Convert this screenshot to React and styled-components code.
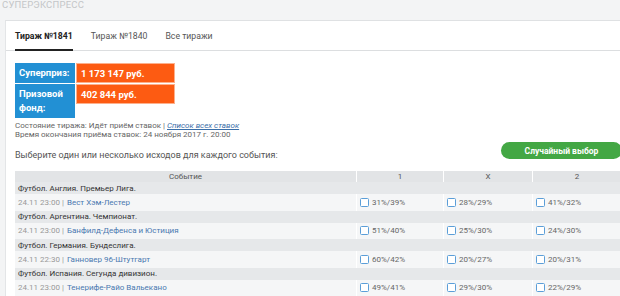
import React from "react";
import styled, { createGlobalStyle } from "styled-components";

const Global = createGlobalStyle`
html, body {
    margin: 0;
    padding: 0;
    background: #f3f4f5;
    font-family: Roboto, "Liberation Sans", sans-serif;
    overflow: hidden;
}
`

const Page = styled.div`
width: 620px;
height: 296px;
overflow: hidden;
background: #f3f4f5;
`

const Heading = styled.div`
height: 20px;
padding-left: 2px;
font-size: 9.5px;
line-height: 10px;
letter-spacing: 0.2px;
color: #c4c6c8;
text-transform: uppercase;
`

const Panel = styled.div`
margin-left: 5px;
background: #fff;
border-top: 1px solid #dfe1e3;
border-left: 1px solid #e3e5e7;
height: 300px;
`

const Tabs = styled.div`
display: flex;
gap: 18px;
padding-left: 9px;
border-bottom: 1px solid #dcdee0;
height: 29px;
`

const Tab = styled.div`
display: flex;
align-items: center;
font-size: 8.7px;
font-weight: ${p => (p.$active ? 700 : 400)};
color: ${p => (p.$active ? "#222" : "#555")};
border-bottom: 2px solid ${p => (p.$active ? "#222" : "transparent")};
margin-bottom: -1px;
padding-top: 1px;
`

const Body = styled.div`
padding: 12px 0 0 9px;
`

const Prize = styled.div`
display: grid;
grid-template-columns: 61px 99px;
width: 160px;
align-items: start;
row-gap: 1px;
`

const Label = styled.div`
background: #2290d4;
color: #fff;
font-size: 9.5px;
font-weight: 700;
line-height: 14px;
padding: 3px 4px;
height: ${p => p.$h}px;
box-sizing: border-box;
border-right: 1px solid #fff;
`

const Value = styled.div`
background: #fd5b12;
color: #fff;
font-size: 9.5px;
font-weight: 700;
line-height: 13px;
padding: 3px 4px;
height: 20px;
box-sizing: border-box;
border: 1px solid #fdb08c;
`

const Status = styled.div`
margin-top: 3px;
font-size: 8px;
line-height: 9px;
color: #666;
`

const Link = styled.a`
color: #3a6ea8;
font-style: italic;
text-decoration: underline;
`

const Choose = styled.div`
display: flex;
justify-content: space-between;
align-items: flex-end;
margin-top: 3px;
`

const Hint = styled.div`
font-size: 9px;
line-height: 10px;
color: #555;
margin-bottom: -1px;
`

const RandomBtn = styled.button`
width: 121px;
height: 17px;
border: none;
border-radius: 9px;
background: #43a744;
color: #fff;
font-family: Roboto, "Liberation Sans", sans-serif;
font-size: 8.5px;
font-weight: 700;
padding: 0;
margin-right: -2px;
`

const Table = styled.div`
margin-top: 12px;
width: 606px;
font-size: 8px;
`

const Row = styled.div`
display: grid;
grid-template-columns: 341px 87px 89px 1fr;
height: ${p => p.$h}px;
background: ${p => p.$bg};
align-items: center;
`

const HeadCell = styled.div`
text-align: center;
color: #555;
height: 100%;
display: flex;
align-items: center;
justify-content: center;
border-left: ${p => (p.$first ? "none" : "1px solid #fff")};
`

const Category = styled.div`
height: 12px;
background: #e6e8ea;
color: #333;
padding-left: 3px;
display: flex;
align-items: center;
`

const EventCell = styled.div`
padding-left: 3px;
color: #999;
height: 100%;
display: flex;
align-items: center;
`

const Team = styled.span`
color: #4a78b0;
margin-left: 3px;
`

const Odds = styled.div`
height: 100%;
display: flex;
align-items: center;
gap: 3px;
padding-left: 3px;
color: #666;
border-left: 1px solid #fff;
`

const Box = styled.span`
width: 7px;
height: 7px;
border: 1px solid #5b9ed8;
border-radius: 1.5px;
background: #fff;
`

const events = [
    { cat: "Футбол. Англия. Премьер Лига.", time: "24.11 23:00", team: "Вест Хэм-Лестер", odds: ["31%/39%", "28%/29%", "41%/32%"] },
    { cat: "Футбол. Аргентина. Чемпионат.", time: "24.11 23:00", team: "Банфилд-Дефенса и Юстиция", odds: ["51%/40%", "25%/30%", "24%/30%"] },
    { cat: "Футбол. Германия. Бундеслига.", time: "24.11 22:30", team: "Ганновер 96-Штутгарт", odds: ["60%/42%", "20%/27%", "20%/31%"] },
    { cat: "Футбол. Испания. Сегунда дивизион.", time: "24.11 23:00", team: "Тенерифе-Райо Вальекано", odds: ["49%/41%", "29%/30%", "22%/29%"] },
]

const App = () => {
    return (
        <Page>
            <Global />
            <Heading>Суперэкспресс</Heading>
            <Panel>
                <Tabs>
                    <Tab $active>Тираж №1841</Tab>
                    <Tab>Тираж №1840</Tab>
                    <Tab>Все тиражи</Tab>
                </Tabs>
                <Body>
                    <Prize>
                        <Label $h={20}>Суперприз:</Label>
                        <Value>1 173 147 руб.</Value>
                        <Label $h={34}>Призовой фонд:</Label>
                        <Value>402 844 руб.</Value>
                    </Prize>
                    <Status>
                        Состояние тиража: Идёт приём ставок | <Link>Список всех ставок</Link>
                        <br />
                        Время окончания приёма ставок: 24 ноября 2017 г. 20:00
                    </Status>
                    <Choose>
                        <Hint>Выберите один или несколько исходов для каждого события:</Hint>
                        <RandomBtn>Случайный выбор</RandomBtn>
                    </Choose>
                    <Table>
                        <Row $h={11} $bg="#e2e4e6">
                            <HeadCell $first>Событие</HeadCell>
                            <HeadCell>1</HeadCell>
                            <HeadCell>X</HeadCell>
                            <HeadCell>2</HeadCell>
                        </Row>
                        {events.map(e => (
                            <React.Fragment key={e.team}>
                                <Category>{e.cat}</Category>
                                <Row $h={16.5} $bg="#f5f6f7">
                                    <EventCell>
                                        {e.time} |<Team>{e.team}</Team>
                                    </EventCell>
                                    {e.odds.map((o, i) => (
                                        <Odds key={i}>
                                            <Box />
                                            {o}
                                        </Odds>
                                    ))}
                                </Row>
                            </React.Fragment>
                        ))}
                    </Table>
                </Body>
            </Panel>
        </Page>
    )
}

export default App;
